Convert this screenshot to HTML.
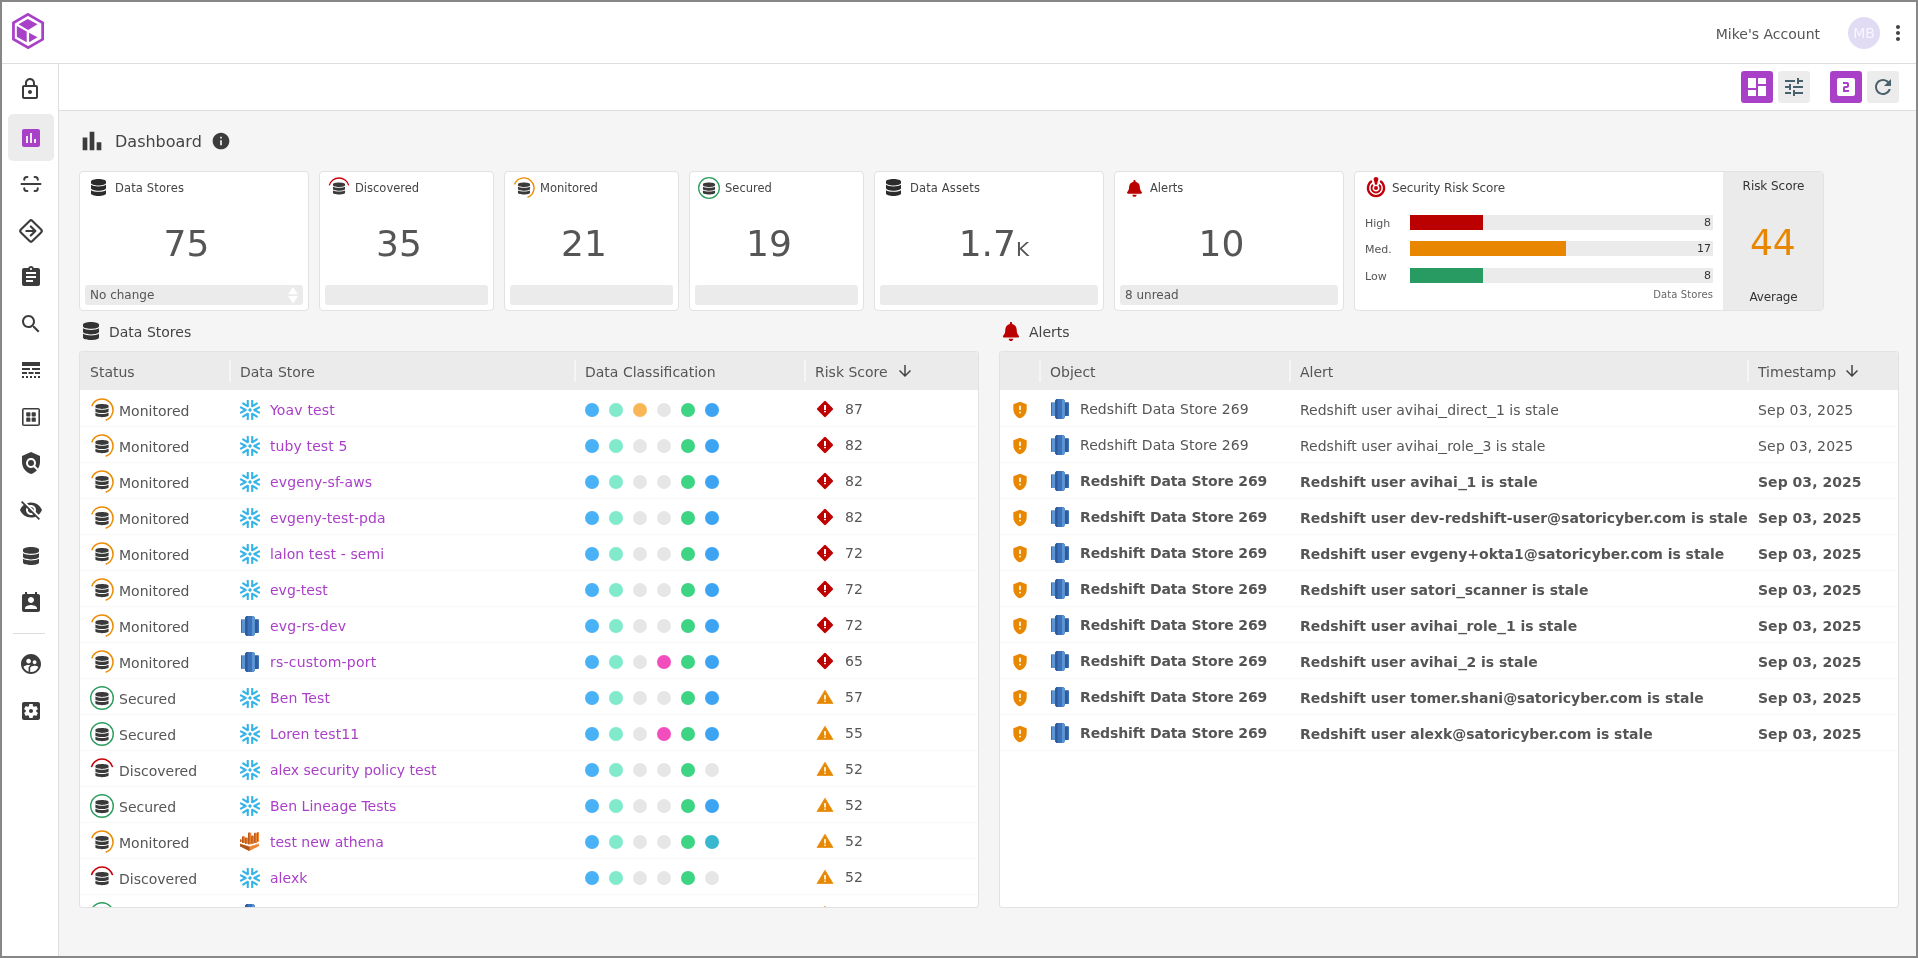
<!DOCTYPE html><html lang="en"><head><meta charset="utf-8"><title>Dashboard</title><style>
*{box-sizing:border-box}
html,body{margin:0;padding:0}
body{width:1918px;height:958px;overflow:hidden;background:#f5f5f5;font-family:"DejaVu Sans","Liberation Sans",sans-serif;color:#555;font-size:14px}
#app{position:relative;width:1918px;height:958px;overflow:hidden;background:#f5f5f5;will-change:transform;filter:grayscale(0)}
#frame{position:absolute;left:0;top:0;width:1918px;height:958px;border:2px solid #878787;border-right-width:2px;z-index:50;pointer-events:none}
.abs{position:absolute}
#header{position:absolute;left:0;top:0;width:1918px;height:64px;background:#fff;border-bottom:1px solid #dedede}
#side{position:absolute;left:0;top:64px;width:59px;height:894px;background:#fff;border-right:1px solid #dedede}
#tool{position:absolute;left:59px;top:64px;width:1859px;height:47px;background:#fff;border-bottom:1px solid #dedede}
.sico{position:absolute;left:19px;width:24px;height:24px}
.sico svg{display:block}
.tbtn{position:absolute;top:71px;width:32px;height:32px;border-radius:3px;background:#ececec}
.tbtn svg{position:absolute;left:4px;top:4px}
.card{position:absolute;top:171px;height:140px;background:#fff;border:1px solid #e2e2e2;border-radius:4px}
.card .lab{position:absolute;left:35px;top:9px;font-size:11.500px;line-height:15px;color:#444;white-space:nowrap}
.card .ico{position:absolute;left:9px;top:6px}
.card .num{position:absolute;left:0;right:15px;top:48px;text-align:center;font-size:36px;line-height:48px;color:#555}
.card .foot{position:absolute;left:5px;right:5px;bottom:5px;height:20px;background:#ebebeb;border-radius:3px;font-size:12px;line-height:20px;padding-left:5px;color:#555}
.sect{position:absolute;top:322px;font-size:14px;line-height:20px;color:#444;white-space:nowrap}
.panel{position:absolute;top:351px;height:557px;background:#fff;border:1px solid #e2e2e2;border-radius:3px;overflow:hidden}
.thead{position:absolute;left:0;top:0;right:0;height:38px;background:#ebebeb}
.th{position:absolute;top:0;height:38px;line-height:40px;font-size:14px;color:#555;white-space:nowrap}
.sep{position:absolute;top:8px;width:2px;height:22px;background:#f5f5f5}
.row{position:absolute;left:0;right:0;height:36px;border-bottom:1px solid #f8f8f8;white-space:nowrap}
.cell{position:absolute;top:1px;height:36px;line-height:36px;font-size:14px;color:#555}
.cell svg{position:absolute}
.lnk{color:#aa40c8}
.dot{position:absolute;top:12px;width:14px;height:14px;border-radius:50%}
.b{font-weight:bold;color:#555;letter-spacing:-.050px}
</style></head><body><div id="app">
<div id="header"><svg width="60" height="60" viewBox="0 0 958 958" style="position:absolute;left:4px;top:6px"><path d="M383 134L617 268V532L386 666L151 532V268z" fill="none" stroke="#a940c8" stroke-width="44" stroke-linejoin="miter"/><path d="M378 207L535 293L385 385L232 293z" fill="#a940c8"/><path d="M205 318L362 408V578L205 490z" fill="#a940c8"/><path d="M400 428L535 500L400 580z" fill="#a940c8"/></svg><div class="abs" style="right:98px;top:24px;font-size:14px;line-height:20px;color:#555">Mike's Account</div><div class="abs" style="left:1848px;top:17px;width:32px;height:32px;border-radius:50%;background:#e1dcf3;color:#f8f6fd;font-size:14px;line-height:32px;text-align:center">MB</div><div class="abs" style="left:1886px;top:21px"><svg width="24" height="24" viewBox="0 0 24 24" fill="#444" style=""><path d="M12 8c1.1 0 2-.9 2-2s-.9-2-2-2-2 .9-2 2 .9 2 2 2zm0 2c-1.1 0-2 .9-2 2s.9 2 2 2 2-.9 2-2-.9-2-2-2zm0 6c-1.1 0-2 .9-2 2s.9 2 2 2 2-.9 2-2-.9-2-2-2z"/></svg></div></div>
<div id="side"><div class="abs" style="left:8px;top:50px;width:46px;height:46.500px;border-radius:5px;background:#ececec"></div><div class="sico" style="top:13px"><svg width="24" height="24" viewBox="0 0 24 24" fill="#3c3c3c" style="margin-left:-1.200px"><path d="M18 8h-1V6c0-2.76-2.24-5-5-5S7 3.24 7 6v2H6c-1.1 0-2 .9-2 2v10c0 1.1.9 2 2 2h12c1.1 0 2-.9 2-2V10c0-1.1-.9-2-2-2zM9 6c0-1.66 1.34-3 3-3s3 1.34 3 3v2H9V6zm9 14H6V10h12v10zm-6-3c1.1 0 2-.9 2-2s-.9-2-2-2-2 .9-2 2 .9 2 2 2z"/></svg></div><div class="sico" style="top:62px"><svg width="24" height="24" viewBox="0 0 24 24" fill="#a940c8" style=""><path d="M19 3H5c-1.1 0-2 .9-2 2v14c0 1.1.9 2 2 2h14c1.1 0 2-.9 2-2V5c0-1.1-.9-2-2-2zM9 17H7v-7h2v7zm4 0h-2V7h2v10zm4 0h-2v-4h2v4z"/></svg></div><div class="sico" style="top:107.9px"><svg width="24" height="24" viewBox="-12 -12 24 24" fill="#3c3c3c" style=""><g fill="none" stroke="#3c3c3c" stroke-width="2" stroke-linecap="round" stroke-linejoin="round"><path d="M-6.750 -4.200V-4.600A2.500 2.500 0 0 1 -4.250 -7.100H-3.600M3.600 -7.100H4.250A2.500 2.500 0 0 1 6.750 -4.600V-4.200M6.750 4.200V4.600A2.500 2.500 0 0 1 4.250 7.100H3.600M-3.600 7.100H-4.250A2.500 2.500 0 0 1 -6.750 4.600V4.200M-9.500 0H9.500"/></g></svg></div><div class="sico" style="top:155px"><svg width="24" height="24" viewBox="-12 -12 24 24" fill="#3c3c3c" style="overflow:visible"><g fill="none" stroke="#3c3c3c" stroke-width="2.100" stroke-linecap="round" stroke-linejoin="round"><rect x="-8.150" y="-8.150" width="16.300" height="16.300" rx="2" transform="rotate(45)"/><path d="M-4.700 0H4.300M-.200 -4.600L4.400 0L-.200 4.600"/></g></svg></div><div class="sico" style="top:200.8px"><svg width="24" height="24" viewBox="0 0 24 24" fill="#3c3c3c" style=""><path d="M19 3h-4.18C14.4 1.84 13.3 1 12 1c-1.3 0-2.4.84-2.82 2H5c-1.1 0-2 .9-2 2v14c0 1.1.9 2 2 2h14c1.1 0 2-.9 2-2V5c0-1.1-.9-2-2-2zm-7 0c.55 0 1 .45 1 1s-.45 1-1 1-1-.45-1-1 .45-1 1-1zm2 14H7v-2h7v2zm3-4H7v-2h10v2zm0-4H7V7h10v2z"/></svg></div><div class="sico" style="top:247.5px"><svg width="24" height="24" viewBox="0 0 24 24" fill="#3c3c3c" style=""><path d="M15.5 14h-.79l-.28-.27C15.41 12.59 16 11.11 16 9.5 16 5.91 13.09 3 9.5 3S3 5.91 3 9.5 5.91 16 9.5 16c1.61 0 3.09-.59 4.23-1.57l.27.28v.79l5 4.99L20.49 19l-4.99-5zm-6 0C7.01 14 5 11.99 5 9.5S7.01 5 9.5 5 14 7.01 14 9.5 11.99 14 9.5 14z"/></svg></div><div class="sico" style="top:294px"><svg width="24" height="24" viewBox="0 0 24 24" fill="#3c3c3c" style=""><path d="M3 16h5v-2H3v2zm6.5 0h5v-2h-5v2zm6.5 0h5v-2h-5v2zM3 20h2v-2H3v2zm4 0h2v-2H7v2zm4 0h2v-2h-2v2zm4 0h2v-2h-2v2zm4 0h2v-2h-2v2zM3 12h8v-2H3v2zm10 0h8v-2h-8v2zM3 4v4h18V4H3z"/></svg></div><div class="sico" style="top:341px"><svg width="24" height="24" viewBox="0 0 24 24" fill="#3c3c3c" style=""><path d="M19 3H5c-1.100 0-2 .900-2 2v14c0 1.100.900 2 2 2h14c1.100 0 2-.900 2-2V5c0-1.100-.900-2-2-2zm.400 16.400H4.600V4.600h14.800v14.800zM8.050 7.200h2.500q.850 0 .850.850v2.500q0 .850-.850.850h-2.500q-.850 0-.850-.850v-2.500q0-.850.850-.850zm5.400 0h2.500q.850 0 .850.850v2.500q0 .850-.850.850h-2.500q-.850 0-.850-.850v-2.500q0-.850.850-.850zm-5.400 5.400h2.500q.850 0 .850.850v2.500q0 .850-.850.850h-2.500q-.850 0-.850-.850v-2.500q0-.850.850-.850zm5.400 0h2.500q.850 0 .850.850v2.500q0 .850-.850.850h-2.500q-.850 0-.850-.850v-2.500q0-.850.850-.850z"/></svg></div><div class="sico" style="top:386.5px"><svg width="24" height="24" viewBox="0 0 24 24" fill="#3c3c3c" style=""><path d="M21 5l-9-4-9 4v6c0 5.55 3.84 10.74 9 12 2.3-.56 4.33-1.9 5.88-3.71l-3.12-3.12c-1.94 1.29-4.58 1.07-6.29-.64-1.95-1.95-1.95-5.12 0-7.07 1.95-1.95 5.12-1.95 7.07 0 1.71 1.71 1.92 4.35.64 6.29l2.9 2.9C20.29 15.69 21 13.38 21 11V5zM12 9a3 3 0 100 6 3 3 0 000-6z"/></svg></div><div class="sico" style="top:434px"><svg width="24" height="24" viewBox="0 0 24 24" fill="#3c3c3c" style=""><path d="M12 7c2.76 0 5 2.24 5 5 0 .65-.13 1.26-.36 1.83l2.92 2.92c1.51-1.26 2.7-2.89 3.43-4.75-1.73-4.39-6-7.5-11-7.5-1.4 0-2.74.25-3.98.7l2.16 2.16C10.74 7.13 11.35 7 12 7zM2 4.27l2.28 2.28.46.46C3.08 8.3 1.78 10.02 1 12c1.73 4.39 6 7.5 11 7.5 1.55 0 3.03-.3 4.38-.84l.42.42L19.73 22 21 20.73 3.27 3 2 4.27zM7.53 9.8l1.55 1.55c-.05.21-.08.43-.08.65 0 1.66 1.34 3 3 3 .22 0 .44-.03.65-.08l1.55 1.55c-.67.33-1.41.53-2.2.53-2.76 0-5-2.24-5-5 0-.79.2-1.53.53-2.2zm4.31-.78l3.15 3.15.02-.16c0-1.66-1.34-3-3-3l-.17.01z"/></svg></div><div class="sico" style="top:480px"><svg width="16" height="18" viewBox="0 0 448 512" preserveAspectRatio="none" fill="#3c3c3c" style="margin:3px 4px"><path d="M448 73.143v45.714C448 159.143 347.667 192 224 192S0 159.143 0 118.857V73.143C0 32.857 100.333 0 224 0s224 32.857 224 73.143zM448 176v102.857C448 319.143 347.667 352 224 352S0 319.143 0 278.857V176c48.125 33.143 136.208 48.572 224 48.572S399.874 209.143 448 176zm0 160v102.857C448 479.143 347.667 512 224 512S0 479.143 0 438.857V336c48.125 33.143 136.208 48.572 224 48.572S399.874 369.143 448 336z"/></svg></div><div class="sico" style="top:526.9px"><svg width="24" height="24" viewBox="0 0 24 24" fill="#3c3c3c" style=""><path d="M19 3h-1V1h-2v2H8V1H6v2H5c-1.11 0-2 .9-2 2v14c0 1.1.89 2 2 2h14c1.1 0 2-.9 2-2V5c0-1.1-.9-2-2-2zm-7 3c1.66 0 3 1.34 3 3s-1.34 3-3 3-3-1.34-3-3 1.34-3 3-3zm6 12H6v-1c0-2 4-3.1 6-3.1s6 1.1 6 3.1v1z"/></svg></div><div class="sico" style="top:587.5px"><svg width="24" height="24" viewBox="0 0 24 24" fill="#3c3c3c" style=""><path d="M11.99 2c-5.52 0-10 4.48-10 10s4.48 10 10 10 10-4.48 10-10-4.48-10-10-10zm3.61 6.34c1.07 0 1.93.86 1.93 1.93 0 1.07-.86 1.93-1.93 1.93-1.07 0-1.93-.86-1.93-1.93-.01-1.07.86-1.93 1.93-1.93zm-6-1.58c1.3 0 2.36 1.06 2.36 2.36 0 1.3-1.06 2.36-2.36 2.36s-2.36-1.06-2.36-2.36c0-1.31 1.05-2.36 2.36-2.36zm0 9.13v3.75c-2.4-.75-4.3-2.6-5.14-4.96 1.05-1.12 3.67-1.69 5.14-1.69.53 0 1.2.08 1.9.22-1.64.87-1.9 2.02-1.9 2.68zM11.99 20c-.27 0-.53-.01-.79-.04v-4.07c0-1.42 2.94-2.13 4.4-2.13 1.07 0 2.92.39 3.84 1.15-1.17 2.97-4.06 5.09-7.45 5.09z"/></svg></div><div class="sico" style="top:634.5px"><svg width="24" height="24" viewBox="0 0 24 24" fill="#3c3c3c" style=""><path d="M12 10c-1.1 0-2 .9-2 2s.9 2 2 2 2-.9 2-2-.9-2-2-2zm7-7H5c-1.11 0-2 .9-2 2v14c0 1.1.89 2 2 2h14c1.11 0 2-.9 2-2V5c0-1.1-.89-2-2-2zm-1.75 9c0 .23-.02.46-.05.68l1.48 1.16c.13.11.17.3.08.45l-1.4 2.42c-.09.15-.27.21-.43.15l-1.74-.7c-.36.28-.76.51-1.18.69l-.26 1.85c-.03.17-.18.3-.35.3h-2.8c-.17 0-.32-.13-.35-.29l-.26-1.85c-.43-.18-.82-.41-1.18-.69l-1.74.7c-.16.06-.34 0-.43-.15l-1.4-2.42c-.09-.15-.05-.34.08-.45l1.48-1.16c-.03-.23-.05-.46-.05-.69 0-.23.02-.46.05-.68l-1.48-1.16c-.13-.11-.17-.3-.08-.45l1.4-2.42c.09-.15.27-.21.43-.15l1.74.7c.36-.28.76-.51 1.18-.69l.26-1.85c.03-.17.18-.3.35-.3h2.8c.17 0 .32.13.35.29l.26 1.85c.43.18.82.41 1.18.69l1.74-.7c.16-.06.34 0 .43.15l1.4 2.42c.09.15.05.34-.08.45l-1.48 1.16c.03.23.05.46.05.69z"/></svg></div><div class="abs" style="left:13px;top:569px;width:32px;height:1px;background:#dcdcdc"></div></div>
<div id="tool"></div>
<div class="tbtn" style="left:1741px;background:#a940c8"><svg width="24" height="24" viewBox="0 0 24 24" fill="#fff" style=""><path d="M3 13h8V3H3v10zm0 8h8v-6H3v6zm10 0h8V11h-8v10zm0-18v6h8V3h-8z"/></svg></div>
<div class="tbtn" style="left:1778px"><svg width="24" height="24" viewBox="0 0 24 24" fill="#49616d" style=""><path d="M3 17v2h6v-2H3zM3 5v2h10V5H3zm10 16v-2h8v-2h-8v-2h-2v6h2zM7 9v2H3v2h4v2h2V9H7zm14 4v-2H11v2h10zm-6-4h2V7h4V5h-4V3h-2v6z"/></svg></div>
<div class="tbtn" style="left:1830px;background:#a940c8"><svg width="24" height="24" viewBox="0 0 24 24" fill="#fff" style=""><path d="M19 3H5c-1.1 0-2 .9-2 2v14c0 1.1.9 2 2 2h14c1.1 0 2-.9 2-2V5c0-1.1-.9-2-2-2zm-4 8c0 1.11-.9 2-2 2h-2v2h4v2H9v-4c0-1.11.9-2 2-2h2V9H9V7h4c1.1 0 2 .89 2 2v2z"/></svg></div>
<div class="tbtn" style="left:1867px"><svg width="24" height="24" viewBox="0 0 24 24" fill="#49616d" style=""><path d="M17.65 6.35C16.2 4.9 14.21 4 12 4c-4.42 0-7.99 3.58-7.99 8s3.57 8 7.99 8c3.73 0 6.84-2.55 7.73-6h-2.08c-.82 2.33-3.04 4-5.65 4-3.31 0-6-2.69-6-6s2.69-6 6-6c1.66 0 3.14.69 4.22 1.78L13 11h7V4l-2.35 2.35z"/></svg></div>
<div class="abs" style="left:78px;top:127px"><svg width="28" height="28" viewBox="0 0 24 24" fill="#3c3c3c" style=""><path d="M16 20v-7h4v7h-4Zm-6 0V4h4v16h-4Zm-6 0V9h4v11H4Z"/></svg></div>
<div class="abs" style="left:115px;top:131px;font-size:16px;line-height:22px;color:#444">Dashboard</div>
<div class="abs" style="left:211px;top:131px"><svg width="20" height="20" viewBox="0 0 24 24" fill="#3c3c3c" style=""><path d="M12 2C6.48 2 2 6.48 2 12s4.48 10 10 10 10-4.48 10-10S17.52 2 12 2zm1 15h-2v-6h2v6zm0-8h-2V7h2v2z"/></svg></div>
<div class="card" style="left:79px;width:230px"><svg width="15" height="17" viewBox="0 0 448 512" preserveAspectRatio="none" fill="#2b2b2b" style="position:absolute;left:11px;top:7px"><path d="M448 73.143v45.714C448 159.143 347.667 192 224 192S0 159.143 0 118.857V73.143C0 32.857 100.333 0 224 0s224 32.857 224 73.143zM448 176v102.857C448 319.143 347.667 352 224 352S0 319.143 0 278.857V176c48.125 33.143 136.208 48.572 224 48.572S399.874 209.143 448 176zm0 160v102.857C448 479.143 347.667 512 224 512S0 479.143 0 438.857V336c48.125 33.143 136.208 48.572 224 48.572S399.874 369.143 448 336z"/></svg><div class="lab"><span style="letter-spacing:.140px">Data Stores</span></div><div class="num" style="">75</div><div class="foot">No change</div><svg class="abs" style="left:207.900px;top:115.200px" width="10" height="16.400" viewBox="0 0 10 16.400"><path d="M5 0l5 7.300H0zM5 16.400l5-7.300H0z" fill="#fff"/></svg></div>
<div class="card" style="left:319px;width:175px"><svg width="22" height="22" viewBox="0 0 24 24" fill="none" style="position:absolute;left:8px;top:5px"><path d="M1.420 9.170A10.950 10.950 0 0 1 22.580 9.170" fill="none" stroke="#c8000a" stroke-width="1.500"/><g transform="translate(5.400 6) scale(.02946 .02578)"><path fill="#3a3a3a" d="M448 73.143v45.714C448 159.143 347.667 192 224 192S0 159.143 0 118.857V73.143C0 32.857 100.333 0 224 0s224 32.857 224 73.143zM448 176v102.857C448 319.143 347.667 352 224 352S0 319.143 0 278.857V176c48.125 33.143 136.208 48.572 224 48.572S399.874 209.143 448 176zm0 160v102.857C448 479.143 347.667 512 224 512S0 479.143 0 438.857V336c48.125 33.143 136.208 48.572 224 48.572S399.874 369.143 448 336z"/></g></svg><div class="lab">Discovered</div><div class="num" style="">35</div><div class="foot"></div></div>
<div class="card" style="left:504px;width:175px"><svg width="22" height="22" viewBox="0 0 24 24" fill="none" style="position:absolute;left:8px;top:5px"><path d="M1.720 8.270A10.950 10.950 0 1 1 15.750 22.290" fill="none" stroke="#ec8b00" stroke-width="1.500"/><g transform="translate(5.400 6) scale(.02946 .02578)"><path fill="#3a3a3a" d="M448 73.143v45.714C448 159.143 347.667 192 224 192S0 159.143 0 118.857V73.143C0 32.857 100.333 0 224 0s224 32.857 224 73.143zM448 176v102.857C448 319.143 347.667 352 224 352S0 319.143 0 278.857V176c48.125 33.143 136.208 48.572 224 48.572S399.874 209.143 448 176zm0 160v102.857C448 479.143 347.667 512 224 512S0 479.143 0 438.857V336c48.125 33.143 136.208 48.572 224 48.572S399.874 369.143 448 336z"/></g></svg><div class="lab">Monitored</div><div class="num" style="">21</div><div class="foot"></div></div>
<div class="card" style="left:689px;width:175px"><svg width="22" height="22" viewBox="0 0 24 24" fill="none" style="position:absolute;left:8px;top:5px"><circle cx="12" cy="12" r="11.300" fill="none" stroke="#2a9d5f" stroke-width="1.400"/><g transform="translate(5.400 6) scale(.02946 .02578)"><path fill="#3a3a3a" d="M448 73.143v45.714C448 159.143 347.667 192 224 192S0 159.143 0 118.857V73.143C0 32.857 100.333 0 224 0s224 32.857 224 73.143zM448 176v102.857C448 319.143 347.667 352 224 352S0 319.143 0 278.857V176c48.125 33.143 136.208 48.572 224 48.572S399.874 209.143 448 176zm0 160v102.857C448 479.143 347.667 512 224 512S0 479.143 0 438.857V336c48.125 33.143 136.208 48.572 224 48.572S399.874 369.143 448 336z"/></g></svg><div class="lab">Secured</div><div class="num" style="">19</div><div class="foot"></div></div>
<div class="card" style="left:874px;width:230px"><svg width="15" height="17" viewBox="0 0 448 512" preserveAspectRatio="none" fill="#2b2b2b" style="position:absolute;left:11px;top:7px"><path d="M448 73.143v45.714C448 159.143 347.667 192 224 192S0 159.143 0 118.857V73.143C0 32.857 100.333 0 224 0s224 32.857 224 73.143zM448 176v102.857C448 319.143 347.667 352 224 352S0 319.143 0 278.857V176c48.125 33.143 136.208 48.572 224 48.572S399.874 209.143 448 176zm0 160v102.857C448 479.143 347.667 512 224 512S0 479.143 0 438.857V336c48.125 33.143 136.208 48.572 224 48.572S399.874 369.143 448 336z"/></svg><div class="lab"><span style="letter-spacing:.140px">Data Assets</span></div><div class="num" style="right:-9.800px">1.7<span style="font-size:20px">K</span></div><div class="foot"></div></div>
<div class="card" style="left:1114px;width:230px"><svg width="15" height="16.8" viewBox="0 0 448 512" preserveAspectRatio="none" fill="#bb0000" style="position:absolute;left:11.500px;top:8px"><path d="M224 512c35.320 0 63.970-28.650 63.970-64H160.030c0 35.350 28.650 64 63.970 64zm215.390-149.710c-19.320-20.760-55.470-51.990-55.470-154.290 0-77.700-54.480-139.900-127.940-155.160V32c0-17.670-14.320-32-31.980-32s-31.980 14.330-31.980 32v20.840C118.560 68.100 64.080 130.300 64.080 208c0 102.300-36.150 133.530-55.470 154.290-6 6.450-8.660 14.160-8.610 21.710.110 16.400 12.980 32 32.100 32h383.800c19.120 0 32-15.600 32.100-32 .050-7.550-2.610-15.270-8.610-21.710z"/></svg><div class="lab">Alerts</div><div class="num" style="">10</div><div class="foot">8 unread</div></div>
<div class="card" style="left:1354px;width:470px;overflow:hidden"><svg width="24" height="24" viewBox="-12 -12 24 24" style="position:absolute;left:9.040px;top:3.870px"><g fill="none" stroke="#c0000a" stroke-linecap="butt"><path d="M4.146 -6.900A8.05 8.05 0 1 1 -4.146 -6.900" stroke-width="2.300"/><path d="M3.069 -3.291A4.5 4.5 0 1 1 -3.069 -3.291" stroke-width="1.900"/></g><circle cx="0" cy="0" r="2" fill="#c0000a"/><path d="M0 -10.900C1.600 -10.900 2.300 -9.900 2.300 -8.800L1 -3.500Q0 -2.900 -1 -3.500L-2.300 -8.800C-2.300 -9.900 -1.600 -10.900 0 -10.900z" fill="#c0000a"/></svg><div class="lab" style="left:37px;font-size:12px;letter-spacing:-.120px">Security Risk Score</div><div class="abs" style="left:10px;top:43.75px;font-size:11px;line-height:16px;color:#555">High</div><div class="abs" style="left:55px;top:43px;width:303px;height:15px;background:#ebebeb"><div style="width:73px;height:15px;background:#bb0000"></div><div class="abs" style="right:2px;top:0;font-size:11px;line-height:15px;color:#333">8</div></div><div class="abs" style="left:10px;top:69.75px;font-size:11px;line-height:16px;color:#555">Med.</div><div class="abs" style="left:55px;top:69px;width:303px;height:15px;background:#ebebeb"><div style="width:156px;height:15px;background:#e88600"></div><div class="abs" style="right:2px;top:0;font-size:11px;line-height:15px;color:#333">17</div></div><div class="abs" style="left:10px;top:96.75px;font-size:11px;line-height:16px;color:#555">Low</div><div class="abs" style="left:55px;top:96px;width:303px;height:15px;background:#ebebeb"><div style="width:73px;height:15px;background:#289b63"></div><div class="abs" style="right:2px;top:0;font-size:11px;line-height:15px;color:#333">8</div></div><div class="abs" style="right:110px;top:117.300px;font-size:10px;line-height:12px;color:#666;letter-spacing:.100px">Data Stores</div><div class="abs" style="left:368px;top:-1px;width:102px;height:140px;background:#ebebeb;text-align:center"><div class="abs" style="left:-1px;right:0;top:8px;font-size:12px;line-height:15px;color:#333;letter-spacing:-.050px">Risk Score</div><div class="abs" style="left:-2.400px;right:0;top:48px;font-size:36px;line-height:48px;color:#e88600">44</div><div class="abs" style="left:-1px;right:0;top:119px;font-size:12px;line-height:15px;color:#333;letter-spacing:-.200px">Average</div></div></div>
<div class="abs" style="left:83px;top:322px"><svg width="16" height="18" viewBox="0 0 448 512" preserveAspectRatio="none" fill="#333" style="display:block"><path d="M448 73.143v45.714C448 159.143 347.667 192 224 192S0 159.143 0 118.857V73.143C0 32.857 100.333 0 224 0s224 32.857 224 73.143zM448 176v102.857C448 319.143 347.667 352 224 352S0 319.143 0 278.857V176c48.125 33.143 136.208 48.572 224 48.572S399.874 209.143 448 176zm0 160v102.857C448 479.143 347.667 512 224 512S0 479.143 0 438.857V336c48.125 33.143 136.208 48.572 224 48.572S399.874 369.143 448 336z"/></svg></div><div class="sect" style="left:109px"><span style="">Data Stores</span></div>
<div class="abs" style="left:1003.100px;top:321.500px"><svg width="16" height="19.2" viewBox="0 0 448 512" preserveAspectRatio="none" fill="#bb0000" style="display:block"><path d="M224 512c35.320 0 63.970-28.650 63.970-64H160.030c0 35.350 28.650 64 63.970 64zm215.390-149.710c-19.320-20.760-55.470-51.990-55.470-154.290 0-77.700-54.480-139.900-127.940-155.160V32c0-17.670-14.320-32-31.980-32s-31.980 14.330-31.980 32v20.840C118.560 68.100 64.080 130.300 64.080 208c0 102.300-36.150 133.530-55.470 154.290-6 6.450-8.660 14.160-8.610 21.710.110 16.400 12.980 32 32.100 32h383.800c19.120 0 32-15.600 32.100-32 .050-7.550-2.610-15.270-8.610-21.710z"/></svg></div><div class="sect" style="left:1029px"><span style="">Alerts</span></div>
<div class="panel" style="left:79px;width:900px"><div class="thead"><div class="th" style="left:10px;">Status</div><div class="th" style="left:160px;">Data Store</div><div class="th" style="left:505px;">Data Classification</div><div class="th" style="left:735px;">Risk Score</div><div class="sep" style="left:149px"></div><div class="sep" style="left:494px"></div><div class="sep" style="left:724px"></div><div class="abs" style="left:816px;top:10px"><svg width="18" height="18" viewBox="0 0 24 24" fill="#444" style=""><path d="M20 12l-1.41-1.41L13 16.17V4h-2v12.17l-5.58-5.59L4 12l8 8 8-8z"/></svg></div></div><div class="row" style="top:39px"><div class="cell" style="left:10px"><svg width="24" height="24" viewBox="0 0 24 24" fill="none" style="left:0;top:6px"><path d="M1.720 8.270A10.950 10.950 0 1 1 15.750 22.290" fill="none" stroke="#ec8b00" stroke-width="1.500"/><g transform="translate(5.400 6) scale(.02946 .02578)"><path fill="#3a3a3a" d="M448 73.143v45.714C448 159.143 347.667 192 224 192S0 159.143 0 118.857V73.143C0 32.857 100.333 0 224 0s224 32.857 224 73.143zM448 176v102.857C448 319.143 347.667 352 224 352S0 319.143 0 278.857V176c48.125 33.143 136.208 48.572 224 48.572S399.874 209.143 448 176zm0 160v102.857C448 479.143 347.667 512 224 512S0 479.143 0 438.857V336c48.125 33.143 136.208 48.572 224 48.572S399.874 369.143 448 336z"/></g></svg><span style="margin-left:29px;position:relative;top:1px;">Monitored</span></div><div class="cell" style="left:160px"><svg width="20" height="20" viewBox="-239.500 -239.500 479 479" style="left:0;top:7.900px"><g fill="none" stroke="#33b3ea" stroke-width="50" stroke-linecap="round" stroke-linejoin="round"><path transform="rotate(0)" d="M219 -64L103 0L219 64"/><path transform="rotate(60)" d="M219 -64L103 0L219 64"/><path transform="rotate(120)" d="M219 -64L103 0L219 64"/><path transform="rotate(180)" d="M219 -64L103 0L219 64"/><path transform="rotate(240)" d="M219 -64L103 0L219 64"/><path transform="rotate(300)" d="M219 -64L103 0L219 64"/></g><rect x="-37" y="-37" width="74" height="74" rx="12" transform="rotate(45)" fill="#33b3ea"/></svg><span class="lnk" style="margin-left:30px;letter-spacing:0.163px">Yoav test</span></div><div class="dot" style="left:505px;background:#49b1f5"></div><div class="dot" style="left:529px;background:#80eacb"></div><div class="dot" style="left:553px;background:#f8b657"></div><div class="dot" style="left:577px;background:#e6e6e6"></div><div class="dot" style="left:601px;background:#3dd584"></div><div class="dot" style="left:625px;background:#3da4f4"></div><div class="cell" style="left:736px"><svg width="18" height="18" viewBox="-9 -9 18 18" style="left:.130px;top:7.920px"><rect x="-6.080" y="-6.080" width="12.160" height="12.160" rx="1.200" transform="rotate(45)" fill="#bd0000"/><rect x="-1" y="-3.900" width="2" height="5" fill="#fff"/><rect x="-1" y="2.100" width="2" height="1.100" fill="#fff"/></svg><span style="margin-left:29px;position:relative;top:-1px">87</span></div></div><div class="row" style="top:75px"><div class="cell" style="left:10px"><svg width="24" height="24" viewBox="0 0 24 24" fill="none" style="left:0;top:6px"><path d="M1.720 8.270A10.950 10.950 0 1 1 15.750 22.290" fill="none" stroke="#ec8b00" stroke-width="1.500"/><g transform="translate(5.400 6) scale(.02946 .02578)"><path fill="#3a3a3a" d="M448 73.143v45.714C448 159.143 347.667 192 224 192S0 159.143 0 118.857V73.143C0 32.857 100.333 0 224 0s224 32.857 224 73.143zM448 176v102.857C448 319.143 347.667 352 224 352S0 319.143 0 278.857V176c48.125 33.143 136.208 48.572 224 48.572S399.874 209.143 448 176zm0 160v102.857C448 479.143 347.667 512 224 512S0 479.143 0 438.857V336c48.125 33.143 136.208 48.572 224 48.572S399.874 369.143 448 336z"/></g></svg><span style="margin-left:29px;position:relative;top:1px;">Monitored</span></div><div class="cell" style="left:160px"><svg width="20" height="20" viewBox="-239.500 -239.500 479 479" style="left:0;top:7.900px"><g fill="none" stroke="#33b3ea" stroke-width="50" stroke-linecap="round" stroke-linejoin="round"><path transform="rotate(0)" d="M219 -64L103 0L219 64"/><path transform="rotate(60)" d="M219 -64L103 0L219 64"/><path transform="rotate(120)" d="M219 -64L103 0L219 64"/><path transform="rotate(180)" d="M219 -64L103 0L219 64"/><path transform="rotate(240)" d="M219 -64L103 0L219 64"/><path transform="rotate(300)" d="M219 -64L103 0L219 64"/></g><rect x="-37" y="-37" width="74" height="74" rx="12" transform="rotate(45)" fill="#33b3ea"/></svg><span class="lnk" style="margin-left:30px;letter-spacing:0.110px">tuby test 5</span></div><div class="dot" style="left:505px;background:#49b1f5"></div><div class="dot" style="left:529px;background:#80eacb"></div><div class="dot" style="left:553px;background:#e6e6e6"></div><div class="dot" style="left:577px;background:#e6e6e6"></div><div class="dot" style="left:601px;background:#3dd584"></div><div class="dot" style="left:625px;background:#3da4f4"></div><div class="cell" style="left:736px"><svg width="18" height="18" viewBox="-9 -9 18 18" style="left:.130px;top:7.920px"><rect x="-6.080" y="-6.080" width="12.160" height="12.160" rx="1.200" transform="rotate(45)" fill="#bd0000"/><rect x="-1" y="-3.900" width="2" height="5" fill="#fff"/><rect x="-1" y="2.100" width="2" height="1.100" fill="#fff"/></svg><span style="margin-left:29px;position:relative;top:-1px">82</span></div></div><div class="row" style="top:111px"><div class="cell" style="left:10px"><svg width="24" height="24" viewBox="0 0 24 24" fill="none" style="left:0;top:6px"><path d="M1.720 8.270A10.950 10.950 0 1 1 15.750 22.290" fill="none" stroke="#ec8b00" stroke-width="1.500"/><g transform="translate(5.400 6) scale(.02946 .02578)"><path fill="#3a3a3a" d="M448 73.143v45.714C448 159.143 347.667 192 224 192S0 159.143 0 118.857V73.143C0 32.857 100.333 0 224 0s224 32.857 224 73.143zM448 176v102.857C448 319.143 347.667 352 224 352S0 319.143 0 278.857V176c48.125 33.143 136.208 48.572 224 48.572S399.874 209.143 448 176zm0 160v102.857C448 479.143 347.667 512 224 512S0 479.143 0 438.857V336c48.125 33.143 136.208 48.572 224 48.572S399.874 369.143 448 336z"/></g></svg><span style="margin-left:29px;position:relative;top:1px;">Monitored</span></div><div class="cell" style="left:160px"><svg width="20" height="20" viewBox="-239.500 -239.500 479 479" style="left:0;top:7.900px"><g fill="none" stroke="#33b3ea" stroke-width="50" stroke-linecap="round" stroke-linejoin="round"><path transform="rotate(0)" d="M219 -64L103 0L219 64"/><path transform="rotate(60)" d="M219 -64L103 0L219 64"/><path transform="rotate(120)" d="M219 -64L103 0L219 64"/><path transform="rotate(180)" d="M219 -64L103 0L219 64"/><path transform="rotate(240)" d="M219 -64L103 0L219 64"/><path transform="rotate(300)" d="M219 -64L103 0L219 64"/></g><rect x="-37" y="-37" width="74" height="74" rx="12" transform="rotate(45)" fill="#33b3ea"/></svg><span class="lnk" style="margin-left:30px;letter-spacing:0.158px">evgeny-sf-aws</span></div><div class="dot" style="left:505px;background:#49b1f5"></div><div class="dot" style="left:529px;background:#80eacb"></div><div class="dot" style="left:553px;background:#e6e6e6"></div><div class="dot" style="left:577px;background:#e6e6e6"></div><div class="dot" style="left:601px;background:#3dd584"></div><div class="dot" style="left:625px;background:#3da4f4"></div><div class="cell" style="left:736px"><svg width="18" height="18" viewBox="-9 -9 18 18" style="left:.130px;top:7.920px"><rect x="-6.080" y="-6.080" width="12.160" height="12.160" rx="1.200" transform="rotate(45)" fill="#bd0000"/><rect x="-1" y="-3.900" width="2" height="5" fill="#fff"/><rect x="-1" y="2.100" width="2" height="1.100" fill="#fff"/></svg><span style="margin-left:29px;position:relative;top:-1px">82</span></div></div><div class="row" style="top:147px"><div class="cell" style="left:10px"><svg width="24" height="24" viewBox="0 0 24 24" fill="none" style="left:0;top:6px"><path d="M1.720 8.270A10.950 10.950 0 1 1 15.750 22.290" fill="none" stroke="#ec8b00" stroke-width="1.500"/><g transform="translate(5.400 6) scale(.02946 .02578)"><path fill="#3a3a3a" d="M448 73.143v45.714C448 159.143 347.667 192 224 192S0 159.143 0 118.857V73.143C0 32.857 100.333 0 224 0s224 32.857 224 73.143zM448 176v102.857C448 319.143 347.667 352 224 352S0 319.143 0 278.857V176c48.125 33.143 136.208 48.572 224 48.572S399.874 209.143 448 176zm0 160v102.857C448 479.143 347.667 512 224 512S0 479.143 0 438.857V336c48.125 33.143 136.208 48.572 224 48.572S399.874 369.143 448 336z"/></g></svg><span style="margin-left:29px;position:relative;top:1px;">Monitored</span></div><div class="cell" style="left:160px"><svg width="20" height="20" viewBox="-239.500 -239.500 479 479" style="left:0;top:7.900px"><g fill="none" stroke="#33b3ea" stroke-width="50" stroke-linecap="round" stroke-linejoin="round"><path transform="rotate(0)" d="M219 -64L103 0L219 64"/><path transform="rotate(60)" d="M219 -64L103 0L219 64"/><path transform="rotate(120)" d="M219 -64L103 0L219 64"/><path transform="rotate(180)" d="M219 -64L103 0L219 64"/><path transform="rotate(240)" d="M219 -64L103 0L219 64"/><path transform="rotate(300)" d="M219 -64L103 0L219 64"/></g><rect x="-37" y="-37" width="74" height="74" rx="12" transform="rotate(45)" fill="#33b3ea"/></svg><span class="lnk" style="margin-left:30px;letter-spacing:0.064px">evgeny-test-pda</span></div><div class="dot" style="left:505px;background:#49b1f5"></div><div class="dot" style="left:529px;background:#80eacb"></div><div class="dot" style="left:553px;background:#e6e6e6"></div><div class="dot" style="left:577px;background:#e6e6e6"></div><div class="dot" style="left:601px;background:#3dd584"></div><div class="dot" style="left:625px;background:#3da4f4"></div><div class="cell" style="left:736px"><svg width="18" height="18" viewBox="-9 -9 18 18" style="left:.130px;top:7.920px"><rect x="-6.080" y="-6.080" width="12.160" height="12.160" rx="1.200" transform="rotate(45)" fill="#bd0000"/><rect x="-1" y="-3.900" width="2" height="5" fill="#fff"/><rect x="-1" y="2.100" width="2" height="1.100" fill="#fff"/></svg><span style="margin-left:29px;position:relative;top:-1px">82</span></div></div><div class="row" style="top:183px"><div class="cell" style="left:10px"><svg width="24" height="24" viewBox="0 0 24 24" fill="none" style="left:0;top:6px"><path d="M1.720 8.270A10.950 10.950 0 1 1 15.750 22.290" fill="none" stroke="#ec8b00" stroke-width="1.500"/><g transform="translate(5.400 6) scale(.02946 .02578)"><path fill="#3a3a3a" d="M448 73.143v45.714C448 159.143 347.667 192 224 192S0 159.143 0 118.857V73.143C0 32.857 100.333 0 224 0s224 32.857 224 73.143zM448 176v102.857C448 319.143 347.667 352 224 352S0 319.143 0 278.857V176c48.125 33.143 136.208 48.572 224 48.572S399.874 209.143 448 176zm0 160v102.857C448 479.143 347.667 512 224 512S0 479.143 0 438.857V336c48.125 33.143 136.208 48.572 224 48.572S399.874 369.143 448 336z"/></g></svg><span style="margin-left:29px;position:relative;top:1px;">Monitored</span></div><div class="cell" style="left:160px"><svg width="20" height="20" viewBox="-239.500 -239.500 479 479" style="left:0;top:7.900px"><g fill="none" stroke="#33b3ea" stroke-width="50" stroke-linecap="round" stroke-linejoin="round"><path transform="rotate(0)" d="M219 -64L103 0L219 64"/><path transform="rotate(60)" d="M219 -64L103 0L219 64"/><path transform="rotate(120)" d="M219 -64L103 0L219 64"/><path transform="rotate(180)" d="M219 -64L103 0L219 64"/><path transform="rotate(240)" d="M219 -64L103 0L219 64"/><path transform="rotate(300)" d="M219 -64L103 0L219 64"/></g><rect x="-37" y="-37" width="74" height="74" rx="12" transform="rotate(45)" fill="#33b3ea"/></svg><span class="lnk" style="margin-left:30px;letter-spacing:0.100px">lalon test - semi</span></div><div class="dot" style="left:505px;background:#49b1f5"></div><div class="dot" style="left:529px;background:#80eacb"></div><div class="dot" style="left:553px;background:#e6e6e6"></div><div class="dot" style="left:577px;background:#e6e6e6"></div><div class="dot" style="left:601px;background:#3dd584"></div><div class="dot" style="left:625px;background:#3da4f4"></div><div class="cell" style="left:736px"><svg width="18" height="18" viewBox="-9 -9 18 18" style="left:.130px;top:7.920px"><rect x="-6.080" y="-6.080" width="12.160" height="12.160" rx="1.200" transform="rotate(45)" fill="#bd0000"/><rect x="-1" y="-3.900" width="2" height="5" fill="#fff"/><rect x="-1" y="2.100" width="2" height="1.100" fill="#fff"/></svg><span style="margin-left:29px;position:relative;top:-1px">72</span></div></div><div class="row" style="top:219px"><div class="cell" style="left:10px"><svg width="24" height="24" viewBox="0 0 24 24" fill="none" style="left:0;top:6px"><path d="M1.720 8.270A10.950 10.950 0 1 1 15.750 22.290" fill="none" stroke="#ec8b00" stroke-width="1.500"/><g transform="translate(5.400 6) scale(.02946 .02578)"><path fill="#3a3a3a" d="M448 73.143v45.714C448 159.143 347.667 192 224 192S0 159.143 0 118.857V73.143C0 32.857 100.333 0 224 0s224 32.857 224 73.143zM448 176v102.857C448 319.143 347.667 352 224 352S0 319.143 0 278.857V176c48.125 33.143 136.208 48.572 224 48.572S399.874 209.143 448 176zm0 160v102.857C448 479.143 347.667 512 224 512S0 479.143 0 438.857V336c48.125 33.143 136.208 48.572 224 48.572S399.874 369.143 448 336z"/></g></svg><span style="margin-left:29px;position:relative;top:1px;">Monitored</span></div><div class="cell" style="left:160px"><svg width="20" height="20" viewBox="-239.500 -239.500 479 479" style="left:0;top:7.900px"><g fill="none" stroke="#33b3ea" stroke-width="50" stroke-linecap="round" stroke-linejoin="round"><path transform="rotate(0)" d="M219 -64L103 0L219 64"/><path transform="rotate(60)" d="M219 -64L103 0L219 64"/><path transform="rotate(120)" d="M219 -64L103 0L219 64"/><path transform="rotate(180)" d="M219 -64L103 0L219 64"/><path transform="rotate(240)" d="M219 -64L103 0L219 64"/><path transform="rotate(300)" d="M219 -64L103 0L219 64"/></g><rect x="-37" y="-37" width="74" height="74" rx="12" transform="rotate(45)" fill="#33b3ea"/></svg><span class="lnk" style="margin-left:30px;letter-spacing:0.000px">evg-test</span></div><div class="dot" style="left:505px;background:#49b1f5"></div><div class="dot" style="left:529px;background:#80eacb"></div><div class="dot" style="left:553px;background:#e6e6e6"></div><div class="dot" style="left:577px;background:#e6e6e6"></div><div class="dot" style="left:601px;background:#3dd584"></div><div class="dot" style="left:625px;background:#3da4f4"></div><div class="cell" style="left:736px"><svg width="18" height="18" viewBox="-9 -9 18 18" style="left:.130px;top:7.920px"><rect x="-6.080" y="-6.080" width="12.160" height="12.160" rx="1.200" transform="rotate(45)" fill="#bd0000"/><rect x="-1" y="-3.900" width="2" height="5" fill="#fff"/><rect x="-1" y="2.100" width="2" height="1.100" fill="#fff"/></svg><span style="margin-left:29px;position:relative;top:-1px">72</span></div></div><div class="row" style="top:255px"><div class="cell" style="left:10px"><svg width="24" height="24" viewBox="0 0 24 24" fill="none" style="left:0;top:6px"><path d="M1.720 8.270A10.950 10.950 0 1 1 15.750 22.290" fill="none" stroke="#ec8b00" stroke-width="1.500"/><g transform="translate(5.400 6) scale(.02946 .02578)"><path fill="#3a3a3a" d="M448 73.143v45.714C448 159.143 347.667 192 224 192S0 159.143 0 118.857V73.143C0 32.857 100.333 0 224 0s224 32.857 224 73.143zM448 176v102.857C448 319.143 347.667 352 224 352S0 319.143 0 278.857V176c48.125 33.143 136.208 48.572 224 48.572S399.874 209.143 448 176zm0 160v102.857C448 479.143 347.667 512 224 512S0 479.143 0 438.857V336c48.125 33.143 136.208 48.572 224 48.572S399.874 369.143 448 336z"/></g></svg><span style="margin-left:29px;position:relative;top:1px;">Monitored</span></div><div class="cell" style="left:160px"><svg width="20" height="20" viewBox="-239.500 -239.500 479 479" style="left:0;top:7.900px"><path fill="#5b95d3" d="M-214 -150L-192 -163H-110V167H-192L-214 154z"/><path fill="#3868ad" d="M-214 -150L-192 -163V167L-214 154z"/><path fill="#2c5a9c" d="M110 -163H183L213 -150V154L183 167H110z"/><path fill="#3d72b9" d="M181 -163H183L213 -150V154L183 167H181z"/><path fill="#3d72b9" d="M-117 -205L-80 -238H80L118 -205V205L80 238H-80L-117 205z"/><path fill="#2c5a9c" d="M-117 -205L-80 -238H-57V238H-80L-117 205z"/><path fill="#5b95d3" d="M48 -238H80L118 -205V205L80 238H48z"/></svg><span class="lnk" style="margin-left:30px;letter-spacing:0.144px">evg-rs-dev</span></div><div class="dot" style="left:505px;background:#49b1f5"></div><div class="dot" style="left:529px;background:#80eacb"></div><div class="dot" style="left:553px;background:#e6e6e6"></div><div class="dot" style="left:577px;background:#e6e6e6"></div><div class="dot" style="left:601px;background:#3dd584"></div><div class="dot" style="left:625px;background:#3da4f4"></div><div class="cell" style="left:736px"><svg width="18" height="18" viewBox="-9 -9 18 18" style="left:.130px;top:7.920px"><rect x="-6.080" y="-6.080" width="12.160" height="12.160" rx="1.200" transform="rotate(45)" fill="#bd0000"/><rect x="-1" y="-3.900" width="2" height="5" fill="#fff"/><rect x="-1" y="2.100" width="2" height="1.100" fill="#fff"/></svg><span style="margin-left:29px;position:relative;top:-1px">72</span></div></div><div class="row" style="top:291px"><div class="cell" style="left:10px"><svg width="24" height="24" viewBox="0 0 24 24" fill="none" style="left:0;top:6px"><path d="M1.720 8.270A10.950 10.950 0 1 1 15.750 22.290" fill="none" stroke="#ec8b00" stroke-width="1.500"/><g transform="translate(5.400 6) scale(.02946 .02578)"><path fill="#3a3a3a" d="M448 73.143v45.714C448 159.143 347.667 192 224 192S0 159.143 0 118.857V73.143C0 32.857 100.333 0 224 0s224 32.857 224 73.143zM448 176v102.857C448 319.143 347.667 352 224 352S0 319.143 0 278.857V176c48.125 33.143 136.208 48.572 224 48.572S399.874 209.143 448 176zm0 160v102.857C448 479.143 347.667 512 224 512S0 479.143 0 438.857V336c48.125 33.143 136.208 48.572 224 48.572S399.874 369.143 448 336z"/></g></svg><span style="margin-left:29px;position:relative;top:1px;">Monitored</span></div><div class="cell" style="left:160px"><svg width="20" height="20" viewBox="-239.500 -239.500 479 479" style="left:0;top:7.900px"><path fill="#5b95d3" d="M-214 -150L-192 -163H-110V167H-192L-214 154z"/><path fill="#3868ad" d="M-214 -150L-192 -163V167L-214 154z"/><path fill="#2c5a9c" d="M110 -163H183L213 -150V154L183 167H110z"/><path fill="#3d72b9" d="M181 -163H183L213 -150V154L183 167H181z"/><path fill="#3d72b9" d="M-117 -205L-80 -238H80L118 -205V205L80 238H-80L-117 205z"/><path fill="#2c5a9c" d="M-117 -205L-80 -238H-57V238H-80L-117 205z"/><path fill="#5b95d3" d="M48 -238H80L118 -205V205L80 238H48z"/></svg><span class="lnk" style="margin-left:30px;letter-spacing:0.215px">rs-custom-port</span></div><div class="dot" style="left:505px;background:#49b1f5"></div><div class="dot" style="left:529px;background:#80eacb"></div><div class="dot" style="left:553px;background:#e6e6e6"></div><div class="dot" style="left:577px;background:#f24dbd"></div><div class="dot" style="left:601px;background:#3dd584"></div><div class="dot" style="left:625px;background:#3da4f4"></div><div class="cell" style="left:736px"><svg width="18" height="18" viewBox="-9 -9 18 18" style="left:.130px;top:7.920px"><rect x="-6.080" y="-6.080" width="12.160" height="12.160" rx="1.200" transform="rotate(45)" fill="#bd0000"/><rect x="-1" y="-3.900" width="2" height="5" fill="#fff"/><rect x="-1" y="2.100" width="2" height="1.100" fill="#fff"/></svg><span style="margin-left:29px;position:relative;top:-1px">65</span></div></div><div class="row" style="top:327px"><div class="cell" style="left:10px"><svg width="24" height="24" viewBox="0 0 24 24" fill="none" style="left:0;top:6px"><circle cx="12" cy="12" r="11.300" fill="none" stroke="#2a9d5f" stroke-width="1.400"/><g transform="translate(5.400 6) scale(.02946 .02578)"><path fill="#3a3a3a" d="M448 73.143v45.714C448 159.143 347.667 192 224 192S0 159.143 0 118.857V73.143C0 32.857 100.333 0 224 0s224 32.857 224 73.143zM448 176v102.857C448 319.143 347.667 352 224 352S0 319.143 0 278.857V176c48.125 33.143 136.208 48.572 224 48.572S399.874 209.143 448 176zm0 160v102.857C448 479.143 347.667 512 224 512S0 479.143 0 438.857V336c48.125 33.143 136.208 48.572 224 48.572S399.874 369.143 448 336z"/></g></svg><span style="margin-left:29px;position:relative;top:1px;">Secured</span></div><div class="cell" style="left:160px"><svg width="20" height="20" viewBox="-239.500 -239.500 479 479" style="left:0;top:7.900px"><g fill="none" stroke="#33b3ea" stroke-width="50" stroke-linecap="round" stroke-linejoin="round"><path transform="rotate(0)" d="M219 -64L103 0L219 64"/><path transform="rotate(60)" d="M219 -64L103 0L219 64"/><path transform="rotate(120)" d="M219 -64L103 0L219 64"/><path transform="rotate(180)" d="M219 -64L103 0L219 64"/><path transform="rotate(240)" d="M219 -64L103 0L219 64"/><path transform="rotate(300)" d="M219 -64L103 0L219 64"/></g><rect x="-37" y="-37" width="74" height="74" rx="12" transform="rotate(45)" fill="#33b3ea"/></svg><span class="lnk" style="margin-left:30px;letter-spacing:0.129px">Ben Test</span></div><div class="dot" style="left:505px;background:#49b1f5"></div><div class="dot" style="left:529px;background:#80eacb"></div><div class="dot" style="left:553px;background:#e6e6e6"></div><div class="dot" style="left:577px;background:#e6e6e6"></div><div class="dot" style="left:601px;background:#3dd584"></div><div class="dot" style="left:625px;background:#3da4f4"></div><div class="cell" style="left:736px"><svg width="18" height="18" viewBox="-9 -1.500 18 18" style="left:.300px;top:8.200px"><path d="M0 .700L8 14H-8z" fill="#e88700" stroke="#e88700" stroke-width=".700" stroke-linejoin="round"/><rect x="-.950" y="5.600" width="1.900" height="4.400" fill="#fdf1dd"/><rect x="-.950" y="11.100" width="1.900" height="1.300" fill="#fdf1dd"/></svg><span style="margin-left:29px;position:relative;top:-1px">57</span></div></div><div class="row" style="top:363px"><div class="cell" style="left:10px"><svg width="24" height="24" viewBox="0 0 24 24" fill="none" style="left:0;top:6px"><circle cx="12" cy="12" r="11.300" fill="none" stroke="#2a9d5f" stroke-width="1.400"/><g transform="translate(5.400 6) scale(.02946 .02578)"><path fill="#3a3a3a" d="M448 73.143v45.714C448 159.143 347.667 192 224 192S0 159.143 0 118.857V73.143C0 32.857 100.333 0 224 0s224 32.857 224 73.143zM448 176v102.857C448 319.143 347.667 352 224 352S0 319.143 0 278.857V176c48.125 33.143 136.208 48.572 224 48.572S399.874 209.143 448 176zm0 160v102.857C448 479.143 347.667 512 224 512S0 479.143 0 438.857V336c48.125 33.143 136.208 48.572 224 48.572S399.874 369.143 448 336z"/></g></svg><span style="margin-left:29px;position:relative;top:1px;">Secured</span></div><div class="cell" style="left:160px"><svg width="20" height="20" viewBox="-239.500 -239.500 479 479" style="left:0;top:7.900px"><g fill="none" stroke="#33b3ea" stroke-width="50" stroke-linecap="round" stroke-linejoin="round"><path transform="rotate(0)" d="M219 -64L103 0L219 64"/><path transform="rotate(60)" d="M219 -64L103 0L219 64"/><path transform="rotate(120)" d="M219 -64L103 0L219 64"/><path transform="rotate(180)" d="M219 -64L103 0L219 64"/><path transform="rotate(240)" d="M219 -64L103 0L219 64"/><path transform="rotate(300)" d="M219 -64L103 0L219 64"/></g><rect x="-37" y="-37" width="74" height="74" rx="12" transform="rotate(45)" fill="#33b3ea"/></svg><span class="lnk" style="margin-left:30px;letter-spacing:0.082px">Loren test11</span></div><div class="dot" style="left:505px;background:#49b1f5"></div><div class="dot" style="left:529px;background:#80eacb"></div><div class="dot" style="left:553px;background:#e6e6e6"></div><div class="dot" style="left:577px;background:#f24dbd"></div><div class="dot" style="left:601px;background:#3dd584"></div><div class="dot" style="left:625px;background:#3da4f4"></div><div class="cell" style="left:736px"><svg width="18" height="18" viewBox="-9 -1.500 18 18" style="left:.300px;top:8.200px"><path d="M0 .700L8 14H-8z" fill="#e88700" stroke="#e88700" stroke-width=".700" stroke-linejoin="round"/><rect x="-.950" y="5.600" width="1.900" height="4.400" fill="#fdf1dd"/><rect x="-.950" y="11.100" width="1.900" height="1.300" fill="#fdf1dd"/></svg><span style="margin-left:29px;position:relative;top:-1px">55</span></div></div><div class="row" style="top:399px"><div class="cell" style="left:10px"><svg width="24" height="24" viewBox="0 0 24 24" fill="none" style="left:0;top:6px"><path d="M1.420 9.170A10.950 10.950 0 0 1 22.580 9.170" fill="none" stroke="#c8000a" stroke-width="1.500"/><g transform="translate(5.400 6) scale(.02946 .02578)"><path fill="#3a3a3a" d="M448 73.143v45.714C448 159.143 347.667 192 224 192S0 159.143 0 118.857V73.143C0 32.857 100.333 0 224 0s224 32.857 224 73.143zM448 176v102.857C448 319.143 347.667 352 224 352S0 319.143 0 278.857V176c48.125 33.143 136.208 48.572 224 48.572S399.874 209.143 448 176zm0 160v102.857C448 479.143 347.667 512 224 512S0 479.143 0 438.857V336c48.125 33.143 136.208 48.572 224 48.572S399.874 369.143 448 336z"/></g></svg><span style="margin-left:29px;position:relative;top:1px;">Discovered</span></div><div class="cell" style="left:160px"><svg width="20" height="20" viewBox="-239.500 -239.500 479 479" style="left:0;top:7.900px"><g fill="none" stroke="#33b3ea" stroke-width="50" stroke-linecap="round" stroke-linejoin="round"><path transform="rotate(0)" d="M219 -64L103 0L219 64"/><path transform="rotate(60)" d="M219 -64L103 0L219 64"/><path transform="rotate(120)" d="M219 -64L103 0L219 64"/><path transform="rotate(180)" d="M219 -64L103 0L219 64"/><path transform="rotate(240)" d="M219 -64L103 0L219 64"/><path transform="rotate(300)" d="M219 -64L103 0L219 64"/></g><rect x="-37" y="-37" width="74" height="74" rx="12" transform="rotate(45)" fill="#33b3ea"/></svg><span class="lnk" style="margin-left:30px;letter-spacing:0.000px">alex security policy test</span></div><div class="dot" style="left:505px;background:#49b1f5"></div><div class="dot" style="left:529px;background:#80eacb"></div><div class="dot" style="left:553px;background:#e6e6e6"></div><div class="dot" style="left:577px;background:#e6e6e6"></div><div class="dot" style="left:601px;background:#3dd584"></div><div class="dot" style="left:625px;background:#e6e6e6"></div><div class="cell" style="left:736px"><svg width="18" height="18" viewBox="-9 -1.500 18 18" style="left:.300px;top:8.200px"><path d="M0 .700L8 14H-8z" fill="#e88700" stroke="#e88700" stroke-width=".700" stroke-linejoin="round"/><rect x="-.950" y="5.600" width="1.900" height="4.400" fill="#fdf1dd"/><rect x="-.950" y="11.100" width="1.900" height="1.300" fill="#fdf1dd"/></svg><span style="margin-left:29px;position:relative;top:-1px">52</span></div></div><div class="row" style="top:435px"><div class="cell" style="left:10px"><svg width="24" height="24" viewBox="0 0 24 24" fill="none" style="left:0;top:6px"><circle cx="12" cy="12" r="11.300" fill="none" stroke="#2a9d5f" stroke-width="1.400"/><g transform="translate(5.400 6) scale(.02946 .02578)"><path fill="#3a3a3a" d="M448 73.143v45.714C448 159.143 347.667 192 224 192S0 159.143 0 118.857V73.143C0 32.857 100.333 0 224 0s224 32.857 224 73.143zM448 176v102.857C448 319.143 347.667 352 224 352S0 319.143 0 278.857V176c48.125 33.143 136.208 48.572 224 48.572S399.874 209.143 448 176zm0 160v102.857C448 479.143 347.667 512 224 512S0 479.143 0 438.857V336c48.125 33.143 136.208 48.572 224 48.572S399.874 369.143 448 336z"/></g></svg><span style="margin-left:29px;position:relative;top:1px;">Secured</span></div><div class="cell" style="left:160px"><svg width="20" height="20" viewBox="-239.500 -239.500 479 479" style="left:0;top:7.900px"><g fill="none" stroke="#33b3ea" stroke-width="50" stroke-linecap="round" stroke-linejoin="round"><path transform="rotate(0)" d="M219 -64L103 0L219 64"/><path transform="rotate(60)" d="M219 -64L103 0L219 64"/><path transform="rotate(120)" d="M219 -64L103 0L219 64"/><path transform="rotate(180)" d="M219 -64L103 0L219 64"/><path transform="rotate(240)" d="M219 -64L103 0L219 64"/><path transform="rotate(300)" d="M219 -64L103 0L219 64"/></g><rect x="-37" y="-37" width="74" height="74" rx="12" transform="rotate(45)" fill="#33b3ea"/></svg><span class="lnk" style="margin-left:30px;letter-spacing:0.012px">Ben Lineage Tests</span></div><div class="dot" style="left:505px;background:#49b1f5"></div><div class="dot" style="left:529px;background:#80eacb"></div><div class="dot" style="left:553px;background:#e6e6e6"></div><div class="dot" style="left:577px;background:#e6e6e6"></div><div class="dot" style="left:601px;background:#3dd584"></div><div class="dot" style="left:625px;background:#3da4f4"></div><div class="cell" style="left:736px"><svg width="18" height="18" viewBox="-9 -1.500 18 18" style="left:.300px;top:8.200px"><path d="M0 .700L8 14H-8z" fill="#e88700" stroke="#e88700" stroke-width=".700" stroke-linejoin="round"/><rect x="-.950" y="5.600" width="1.900" height="4.400" fill="#fdf1dd"/><rect x="-.950" y="11.100" width="1.900" height="1.300" fill="#fdf1dd"/></svg><span style="margin-left:29px;position:relative;top:-1px">52</span></div></div><div class="row" style="top:471px"><div class="cell" style="left:10px"><svg width="24" height="24" viewBox="0 0 24 24" fill="none" style="left:0;top:6px"><path d="M1.720 8.270A10.950 10.950 0 1 1 15.750 22.290" fill="none" stroke="#ec8b00" stroke-width="1.500"/><g transform="translate(5.400 6) scale(.02946 .02578)"><path fill="#3a3a3a" d="M448 73.143v45.714C448 159.143 347.667 192 224 192S0 159.143 0 118.857V73.143C0 32.857 100.333 0 224 0s224 32.857 224 73.143zM448 176v102.857C448 319.143 347.667 352 224 352S0 319.143 0 278.857V176c48.125 33.143 136.208 48.572 224 48.572S399.874 209.143 448 176zm0 160v102.857C448 479.143 347.667 512 224 512S0 479.143 0 438.857V336c48.125 33.143 136.208 48.572 224 48.572S399.874 369.143 448 336z"/></g></svg><span style="margin-left:29px;position:relative;top:1px;">Monitored</span></div><div class="cell" style="left:160px"><svg width="20" height="20" viewBox="-239.500 -239.500 479 479" style="left:0;top:7.900px"><path fill="#ee8430" d="M-240 -51Q-240 -63 -219 -63Q-190 -63 -190 -51V-3H-240z"/><path fill="#ad531f" d="M-240 -51Q-240 -63 -219 -63V-3H-240z"/><path fill="#ee8430" d="M-190 -126Q-190 -138 -158 -138Q-115 -138 -115 -126V22H-190z"/><path fill="#ad531f" d="M-190 -126Q-190 -138 -158 -138V22H-190z"/><path fill="#ee8430" d="M-115 -96Q-115 -108 -86 -108Q-45 -108 -45 -96V40H-115z"/><path fill="#ad531f" d="M-115 -96Q-115 -108 -86 -108V40H-115z"/><path fill="#ee8430" d="M-45 -216Q-45 -228 -14 -228Q30 -228 30 -216V52H-45z"/><path fill="#ad531f" d="M-45 -216Q-45 -228 -14 -228V52H-45z"/><path fill="#ee8430" d="M30 -146Q30 -158 59 -158Q100 -158 100 -146V40H30z"/><path fill="#ad531f" d="M30 -146Q30 -158 59 -158V40H30z"/><path fill="#ee8430" d="M100 -211Q100 -223 129 -223Q170 -223 170 -211V22H100z"/><path fill="#ad531f" d="M100 -211Q100 -223 129 -223V22H100z"/><path fill="#ee8430" d="M170 -226Q170 -238 189 -238Q215 -238 215 -226V-8H170z"/><path fill="#ad531f" d="M170 -226Q170 -238 189 -238V-8H170z"/><path fill="#f9bb82" d="M-240 30L-15 100L215 30V52L-15 122L-240 52z"/><path fill="#ee8430" d="M-240 46L-15 116L215 46V97L-15 217L-240 102z"/><path fill="#ad531f" d="M-240 46L-15 116V217L-240 102z"/></svg><span class="lnk" style="margin-left:30px;letter-spacing:0.007px">test new athena</span></div><div class="dot" style="left:505px;background:#49b1f5"></div><div class="dot" style="left:529px;background:#80eacb"></div><div class="dot" style="left:553px;background:#e6e6e6"></div><div class="dot" style="left:577px;background:#e6e6e6"></div><div class="dot" style="left:601px;background:#3dd584"></div><div class="dot" style="left:625px;background:#38b8cf"></div><div class="cell" style="left:736px"><svg width="18" height="18" viewBox="-9 -1.500 18 18" style="left:.300px;top:8.200px"><path d="M0 .700L8 14H-8z" fill="#e88700" stroke="#e88700" stroke-width=".700" stroke-linejoin="round"/><rect x="-.950" y="5.600" width="1.900" height="4.400" fill="#fdf1dd"/><rect x="-.950" y="11.100" width="1.900" height="1.300" fill="#fdf1dd"/></svg><span style="margin-left:29px;position:relative;top:-1px">52</span></div></div><div class="row" style="top:507px"><div class="cell" style="left:10px"><svg width="24" height="24" viewBox="0 0 24 24" fill="none" style="left:0;top:6px"><path d="M1.420 9.170A10.950 10.950 0 0 1 22.580 9.170" fill="none" stroke="#c8000a" stroke-width="1.500"/><g transform="translate(5.400 6) scale(.02946 .02578)"><path fill="#3a3a3a" d="M448 73.143v45.714C448 159.143 347.667 192 224 192S0 159.143 0 118.857V73.143C0 32.857 100.333 0 224 0s224 32.857 224 73.143zM448 176v102.857C448 319.143 347.667 352 224 352S0 319.143 0 278.857V176c48.125 33.143 136.208 48.572 224 48.572S399.874 209.143 448 176zm0 160v102.857C448 479.143 347.667 512 224 512S0 479.143 0 438.857V336c48.125 33.143 136.208 48.572 224 48.572S399.874 369.143 448 336z"/></g></svg><span style="margin-left:29px;position:relative;top:1px;">Discovered</span></div><div class="cell" style="left:160px"><svg width="20" height="20" viewBox="-239.500 -239.500 479 479" style="left:0;top:7.900px"><g fill="none" stroke="#33b3ea" stroke-width="50" stroke-linecap="round" stroke-linejoin="round"><path transform="rotate(0)" d="M219 -64L103 0L219 64"/><path transform="rotate(60)" d="M219 -64L103 0L219 64"/><path transform="rotate(120)" d="M219 -64L103 0L219 64"/><path transform="rotate(180)" d="M219 -64L103 0L219 64"/><path transform="rotate(240)" d="M219 -64L103 0L219 64"/><path transform="rotate(300)" d="M219 -64L103 0L219 64"/></g><rect x="-37" y="-37" width="74" height="74" rx="12" transform="rotate(45)" fill="#33b3ea"/></svg><span class="lnk" style="margin-left:30px;letter-spacing:0.025px">alexk</span></div><div class="dot" style="left:505px;background:#49b1f5"></div><div class="dot" style="left:529px;background:#80eacb"></div><div class="dot" style="left:553px;background:#e6e6e6"></div><div class="dot" style="left:577px;background:#e6e6e6"></div><div class="dot" style="left:601px;background:#3dd584"></div><div class="dot" style="left:625px;background:#e6e6e6"></div><div class="cell" style="left:736px"><svg width="18" height="18" viewBox="-9 -1.500 18 18" style="left:.300px;top:8.200px"><path d="M0 .700L8 14H-8z" fill="#e88700" stroke="#e88700" stroke-width=".700" stroke-linejoin="round"/><rect x="-.950" y="5.600" width="1.900" height="4.400" fill="#fdf1dd"/><rect x="-.950" y="11.100" width="1.900" height="1.300" fill="#fdf1dd"/></svg><span style="margin-left:29px;position:relative;top:-1px">52</span></div></div><div class="row" style="top:543px"><div class="cell" style="left:10px"><svg width="24" height="24" viewBox="0 0 24 24" fill="none" style="left:0;top:6px"><circle cx="12" cy="12" r="11.300" fill="none" stroke="#2a9d5f" stroke-width="1.400"/><g transform="translate(5.400 6) scale(.02946 .02578)"><path fill="#3a3a3a" d="M448 73.143v45.714C448 159.143 347.667 192 224 192S0 159.143 0 118.857V73.143C0 32.857 100.333 0 224 0s224 32.857 224 73.143zM448 176v102.857C448 319.143 347.667 352 224 352S0 319.143 0 278.857V176c48.125 33.143 136.208 48.572 224 48.572S399.874 209.143 448 176zm0 160v102.857C448 479.143 347.667 512 224 512S0 479.143 0 438.857V336c48.125 33.143 136.208 48.572 224 48.572S399.874 369.143 448 336z"/></g></svg><span style="margin-left:29px;position:relative;top:1px;">Secured</span></div><div class="cell" style="left:160px"><svg width="20" height="20" viewBox="-239.500 -239.500 479 479" style="left:0;top:7.900px"><path fill="#5b95d3" d="M-214 -150L-192 -163H-110V167H-192L-214 154z"/><path fill="#3868ad" d="M-214 -150L-192 -163V167L-214 154z"/><path fill="#2c5a9c" d="M110 -163H183L213 -150V154L183 167H110z"/><path fill="#3d72b9" d="M181 -163H183L213 -150V154L183 167H181z"/><path fill="#3d72b9" d="M-117 -205L-80 -238H80L118 -205V205L80 238H-80L-117 205z"/><path fill="#2c5a9c" d="M-117 -205L-80 -238H-57V238H-80L-117 205z"/><path fill="#5b95d3" d="M48 -238H80L118 -205V205L80 238H48z"/></svg><span class="lnk" style="margin-left:30px;letter-spacing:0.000px">rs store</span></div><div class="dot" style="left:505px;background:#49b1f5"></div><div class="dot" style="left:529px;background:#80eacb"></div><div class="dot" style="left:553px;background:#e6e6e6"></div><div class="dot" style="left:577px;background:#e6e6e6"></div><div class="dot" style="left:601px;background:#3dd584"></div><div class="dot" style="left:625px;background:#3da4f4"></div><div class="cell" style="left:736px"><svg width="18" height="18" viewBox="-9 -1.500 18 18" style="left:.300px;top:8.200px"><path d="M0 .700L8 14H-8z" fill="#e88700" stroke="#e88700" stroke-width=".700" stroke-linejoin="round"/><rect x="-.950" y="5.600" width="1.900" height="4.400" fill="#fdf1dd"/><rect x="-.950" y="11.100" width="1.900" height="1.300" fill="#fdf1dd"/></svg><span style="margin-left:29px;position:relative;top:-1px">50</span></div></div></div>
<div class="panel" style="left:999px;width:900px"><div class="thead"><div class="th" style="left:50px;">Object</div><div class="th" style="left:300px;">Alert</div><div class="th" style="left:758px;">Timestamp</div><div class="sep" style="left:39px"></div><div class="sep" style="left:289px"></div><div class="sep" style="left:747px"></div><div class="abs" style="left:843px;top:10px"><svg width="18" height="18" viewBox="0 0 24 24" fill="#444" style=""><path d="M20 12l-1.41-1.41L13 16.17V4h-2v12.17l-5.58-5.59L4 12l8 8 8-8z"/></svg></div></div><div class="row" style="top:39px"><div class="cell" style="left:9.500px"><svg width="20" height="20" viewBox="0 0 24 24" fill="#e88700" style="left:0;top:8px"><path d="M12 2L4 5v6.09c0 5.05 3.41 9.76 8 10.91 4.59-1.15 8-5.86 8-10.91V5l-8-3zm1 14h-2v-2h2v2zm0-4h-2V7h2v5z"/></svg></div><div class="cell" style="left:50px"><svg width="20" height="20" viewBox="-239.500 -239.500 479 479" style="left:0;top:6.830px"><path fill="#5b95d3" d="M-214 -150L-192 -163H-110V167H-192L-214 154z"/><path fill="#3868ad" d="M-214 -150L-192 -163V167L-214 154z"/><path fill="#2c5a9c" d="M110 -163H183L213 -150V154L183 167H110z"/><path fill="#3d72b9" d="M181 -163H183L213 -150V154L183 167H181z"/><path fill="#3d72b9" d="M-117 -205L-80 -238H80L118 -205V205L80 238H-80L-117 205z"/><path fill="#2c5a9c" d="M-117 -205L-80 -238H-57V238H-80L-117 205z"/><path fill="#5b95d3" d="M48 -238H80L118 -205V205L80 238H48z"/></svg><span style="margin-left:30px;position:relative;top:-1px;letter-spacing:.060px">Redshift Data Store 269</span></div><div class="cell" style="left:300px"><span style="">Redshift user avihai<span style="display:inline-block;transform:scaleX(1.250);margin:0 .900px">_</span>direct<span style="display:inline-block;transform:scaleX(1.250);margin:0 .900px">_</span>1 is stale</span></div><div class="cell" style="left:758px"><span style="letter-spacing:.190px">Sep 03, 2025</span></div></div><div class="row" style="top:75px"><div class="cell" style="left:9.500px"><svg width="20" height="20" viewBox="0 0 24 24" fill="#e88700" style="left:0;top:8px"><path d="M12 2L4 5v6.09c0 5.05 3.41 9.76 8 10.91 4.59-1.15 8-5.86 8-10.91V5l-8-3zm1 14h-2v-2h2v2zm0-4h-2V7h2v5z"/></svg></div><div class="cell" style="left:50px"><svg width="20" height="20" viewBox="-239.500 -239.500 479 479" style="left:0;top:6.830px"><path fill="#5b95d3" d="M-214 -150L-192 -163H-110V167H-192L-214 154z"/><path fill="#3868ad" d="M-214 -150L-192 -163V167L-214 154z"/><path fill="#2c5a9c" d="M110 -163H183L213 -150V154L183 167H110z"/><path fill="#3d72b9" d="M181 -163H183L213 -150V154L183 167H181z"/><path fill="#3d72b9" d="M-117 -205L-80 -238H80L118 -205V205L80 238H-80L-117 205z"/><path fill="#2c5a9c" d="M-117 -205L-80 -238H-57V238H-80L-117 205z"/><path fill="#5b95d3" d="M48 -238H80L118 -205V205L80 238H48z"/></svg><span style="margin-left:30px;position:relative;top:-1px;letter-spacing:.060px">Redshift Data Store 269</span></div><div class="cell" style="left:300px"><span style="">Redshift user avihai<span style="display:inline-block;transform:scaleX(1.250);margin:0 .900px">_</span>role<span style="display:inline-block;transform:scaleX(1.250);margin:0 .900px">_</span>3 is stale</span></div><div class="cell" style="left:758px"><span style="letter-spacing:.190px">Sep 03, 2025</span></div></div><div class="row" style="top:111px"><div class="cell" style="left:9.500px"><svg width="20" height="20" viewBox="0 0 24 24" fill="#e88700" style="left:0;top:8px"><path d="M12 2L4 5v6.09c0 5.05 3.41 9.76 8 10.91 4.59-1.15 8-5.86 8-10.91V5l-8-3zm1 14h-2v-2h2v2zm0-4h-2V7h2v5z"/></svg></div><div class="cell b" style="left:50px"><svg width="20" height="20" viewBox="-239.500 -239.500 479 479" style="left:0;top:6.830px"><path fill="#5b95d3" d="M-214 -150L-192 -163H-110V167H-192L-214 154z"/><path fill="#3868ad" d="M-214 -150L-192 -163V167L-214 154z"/><path fill="#2c5a9c" d="M110 -163H183L213 -150V154L183 167H110z"/><path fill="#3d72b9" d="M181 -163H183L213 -150V154L183 167H181z"/><path fill="#3d72b9" d="M-117 -205L-80 -238H80L118 -205V205L80 238H-80L-117 205z"/><path fill="#2c5a9c" d="M-117 -205L-80 -238H-57V238H-80L-117 205z"/><path fill="#5b95d3" d="M48 -238H80L118 -205V205L80 238H48z"/></svg><span style="margin-left:30px;position:relative;top:-1px;letter-spacing:-.125px">Redshift Data Store 269</span></div><div class="cell b" style="left:300px"><span style="letter-spacing:-.025px">Redshift user avihai<span style="display:inline-block;transform:scaleX(1.250);margin:0 .900px">_</span>1 is stale</span></div><div class="cell b" style="left:758px"><span style="letter-spacing:.030px">Sep 03, 2025</span></div></div><div class="row" style="top:147px"><div class="cell" style="left:9.500px"><svg width="20" height="20" viewBox="0 0 24 24" fill="#e88700" style="left:0;top:8px"><path d="M12 2L4 5v6.09c0 5.05 3.41 9.76 8 10.91 4.59-1.15 8-5.86 8-10.91V5l-8-3zm1 14h-2v-2h2v2zm0-4h-2V7h2v5z"/></svg></div><div class="cell b" style="left:50px"><svg width="20" height="20" viewBox="-239.500 -239.500 479 479" style="left:0;top:6.830px"><path fill="#5b95d3" d="M-214 -150L-192 -163H-110V167H-192L-214 154z"/><path fill="#3868ad" d="M-214 -150L-192 -163V167L-214 154z"/><path fill="#2c5a9c" d="M110 -163H183L213 -150V154L183 167H110z"/><path fill="#3d72b9" d="M181 -163H183L213 -150V154L183 167H181z"/><path fill="#3d72b9" d="M-117 -205L-80 -238H80L118 -205V205L80 238H-80L-117 205z"/><path fill="#2c5a9c" d="M-117 -205L-80 -238H-57V238H-80L-117 205z"/><path fill="#5b95d3" d="M48 -238H80L118 -205V205L80 238H48z"/></svg><span style="margin-left:30px;position:relative;top:-1px;letter-spacing:-.125px">Redshift Data Store 269</span></div><div class="cell b" style="left:300px"><span style="letter-spacing:-.025px">Redshift user dev-redshift-user@satoricyber.com is stale</span></div><div class="cell b" style="left:758px"><span style="letter-spacing:.030px">Sep 03, 2025</span></div></div><div class="row" style="top:183px"><div class="cell" style="left:9.500px"><svg width="20" height="20" viewBox="0 0 24 24" fill="#e88700" style="left:0;top:8px"><path d="M12 2L4 5v6.09c0 5.05 3.41 9.76 8 10.91 4.59-1.15 8-5.86 8-10.91V5l-8-3zm1 14h-2v-2h2v2zm0-4h-2V7h2v5z"/></svg></div><div class="cell b" style="left:50px"><svg width="20" height="20" viewBox="-239.500 -239.500 479 479" style="left:0;top:6.830px"><path fill="#5b95d3" d="M-214 -150L-192 -163H-110V167H-192L-214 154z"/><path fill="#3868ad" d="M-214 -150L-192 -163V167L-214 154z"/><path fill="#2c5a9c" d="M110 -163H183L213 -150V154L183 167H110z"/><path fill="#3d72b9" d="M181 -163H183L213 -150V154L183 167H181z"/><path fill="#3d72b9" d="M-117 -205L-80 -238H80L118 -205V205L80 238H-80L-117 205z"/><path fill="#2c5a9c" d="M-117 -205L-80 -238H-57V238H-80L-117 205z"/><path fill="#5b95d3" d="M48 -238H80L118 -205V205L80 238H48z"/></svg><span style="margin-left:30px;position:relative;top:-1px;letter-spacing:-.125px">Redshift Data Store 269</span></div><div class="cell b" style="left:300px"><span style="letter-spacing:-.025px">Redshift user evgeny+okta1@satoricyber.com is stale</span></div><div class="cell b" style="left:758px"><span style="letter-spacing:.030px">Sep 03, 2025</span></div></div><div class="row" style="top:219px"><div class="cell" style="left:9.500px"><svg width="20" height="20" viewBox="0 0 24 24" fill="#e88700" style="left:0;top:8px"><path d="M12 2L4 5v6.09c0 5.05 3.41 9.76 8 10.91 4.59-1.15 8-5.86 8-10.91V5l-8-3zm1 14h-2v-2h2v2zm0-4h-2V7h2v5z"/></svg></div><div class="cell b" style="left:50px"><svg width="20" height="20" viewBox="-239.500 -239.500 479 479" style="left:0;top:6.830px"><path fill="#5b95d3" d="M-214 -150L-192 -163H-110V167H-192L-214 154z"/><path fill="#3868ad" d="M-214 -150L-192 -163V167L-214 154z"/><path fill="#2c5a9c" d="M110 -163H183L213 -150V154L183 167H110z"/><path fill="#3d72b9" d="M181 -163H183L213 -150V154L183 167H181z"/><path fill="#3d72b9" d="M-117 -205L-80 -238H80L118 -205V205L80 238H-80L-117 205z"/><path fill="#2c5a9c" d="M-117 -205L-80 -238H-57V238H-80L-117 205z"/><path fill="#5b95d3" d="M48 -238H80L118 -205V205L80 238H48z"/></svg><span style="margin-left:30px;position:relative;top:-1px;letter-spacing:-.125px">Redshift Data Store 269</span></div><div class="cell b" style="left:300px"><span style="letter-spacing:-.025px">Redshift user satori<span style="display:inline-block;transform:scaleX(1.250);margin:0 .900px">_</span>scanner is stale</span></div><div class="cell b" style="left:758px"><span style="letter-spacing:.030px">Sep 03, 2025</span></div></div><div class="row" style="top:255px"><div class="cell" style="left:9.500px"><svg width="20" height="20" viewBox="0 0 24 24" fill="#e88700" style="left:0;top:8px"><path d="M12 2L4 5v6.09c0 5.05 3.41 9.76 8 10.91 4.59-1.15 8-5.86 8-10.91V5l-8-3zm1 14h-2v-2h2v2zm0-4h-2V7h2v5z"/></svg></div><div class="cell b" style="left:50px"><svg width="20" height="20" viewBox="-239.500 -239.500 479 479" style="left:0;top:6.830px"><path fill="#5b95d3" d="M-214 -150L-192 -163H-110V167H-192L-214 154z"/><path fill="#3868ad" d="M-214 -150L-192 -163V167L-214 154z"/><path fill="#2c5a9c" d="M110 -163H183L213 -150V154L183 167H110z"/><path fill="#3d72b9" d="M181 -163H183L213 -150V154L183 167H181z"/><path fill="#3d72b9" d="M-117 -205L-80 -238H80L118 -205V205L80 238H-80L-117 205z"/><path fill="#2c5a9c" d="M-117 -205L-80 -238H-57V238H-80L-117 205z"/><path fill="#5b95d3" d="M48 -238H80L118 -205V205L80 238H48z"/></svg><span style="margin-left:30px;position:relative;top:-1px;letter-spacing:-.125px">Redshift Data Store 269</span></div><div class="cell b" style="left:300px"><span style="letter-spacing:-.025px">Redshift user avihai<span style="display:inline-block;transform:scaleX(1.250);margin:0 .900px">_</span>role<span style="display:inline-block;transform:scaleX(1.250);margin:0 .900px">_</span>1 is stale</span></div><div class="cell b" style="left:758px"><span style="letter-spacing:.030px">Sep 03, 2025</span></div></div><div class="row" style="top:291px"><div class="cell" style="left:9.500px"><svg width="20" height="20" viewBox="0 0 24 24" fill="#e88700" style="left:0;top:8px"><path d="M12 2L4 5v6.09c0 5.05 3.41 9.76 8 10.91 4.59-1.15 8-5.86 8-10.91V5l-8-3zm1 14h-2v-2h2v2zm0-4h-2V7h2v5z"/></svg></div><div class="cell b" style="left:50px"><svg width="20" height="20" viewBox="-239.500 -239.500 479 479" style="left:0;top:6.830px"><path fill="#5b95d3" d="M-214 -150L-192 -163H-110V167H-192L-214 154z"/><path fill="#3868ad" d="M-214 -150L-192 -163V167L-214 154z"/><path fill="#2c5a9c" d="M110 -163H183L213 -150V154L183 167H110z"/><path fill="#3d72b9" d="M181 -163H183L213 -150V154L183 167H181z"/><path fill="#3d72b9" d="M-117 -205L-80 -238H80L118 -205V205L80 238H-80L-117 205z"/><path fill="#2c5a9c" d="M-117 -205L-80 -238H-57V238H-80L-117 205z"/><path fill="#5b95d3" d="M48 -238H80L118 -205V205L80 238H48z"/></svg><span style="margin-left:30px;position:relative;top:-1px;letter-spacing:-.125px">Redshift Data Store 269</span></div><div class="cell b" style="left:300px"><span style="letter-spacing:-.025px">Redshift user avihai<span style="display:inline-block;transform:scaleX(1.250);margin:0 .900px">_</span>2 is stale</span></div><div class="cell b" style="left:758px"><span style="letter-spacing:.030px">Sep 03, 2025</span></div></div><div class="row" style="top:327px"><div class="cell" style="left:9.500px"><svg width="20" height="20" viewBox="0 0 24 24" fill="#e88700" style="left:0;top:8px"><path d="M12 2L4 5v6.09c0 5.05 3.41 9.76 8 10.91 4.59-1.15 8-5.86 8-10.91V5l-8-3zm1 14h-2v-2h2v2zm0-4h-2V7h2v5z"/></svg></div><div class="cell b" style="left:50px"><svg width="20" height="20" viewBox="-239.500 -239.500 479 479" style="left:0;top:6.830px"><path fill="#5b95d3" d="M-214 -150L-192 -163H-110V167H-192L-214 154z"/><path fill="#3868ad" d="M-214 -150L-192 -163V167L-214 154z"/><path fill="#2c5a9c" d="M110 -163H183L213 -150V154L183 167H110z"/><path fill="#3d72b9" d="M181 -163H183L213 -150V154L183 167H181z"/><path fill="#3d72b9" d="M-117 -205L-80 -238H80L118 -205V205L80 238H-80L-117 205z"/><path fill="#2c5a9c" d="M-117 -205L-80 -238H-57V238H-80L-117 205z"/><path fill="#5b95d3" d="M48 -238H80L118 -205V205L80 238H48z"/></svg><span style="margin-left:30px;position:relative;top:-1px;letter-spacing:-.125px">Redshift Data Store 269</span></div><div class="cell b" style="left:300px"><span style="letter-spacing:-.025px">Redshift user tomer.shani@satoricyber.com is stale</span></div><div class="cell b" style="left:758px"><span style="letter-spacing:.030px">Sep 03, 2025</span></div></div><div class="row" style="top:363px"><div class="cell" style="left:9.500px"><svg width="20" height="20" viewBox="0 0 24 24" fill="#e88700" style="left:0;top:8px"><path d="M12 2L4 5v6.09c0 5.05 3.41 9.76 8 10.91 4.59-1.15 8-5.86 8-10.91V5l-8-3zm1 14h-2v-2h2v2zm0-4h-2V7h2v5z"/></svg></div><div class="cell b" style="left:50px"><svg width="20" height="20" viewBox="-239.500 -239.500 479 479" style="left:0;top:6.830px"><path fill="#5b95d3" d="M-214 -150L-192 -163H-110V167H-192L-214 154z"/><path fill="#3868ad" d="M-214 -150L-192 -163V167L-214 154z"/><path fill="#2c5a9c" d="M110 -163H183L213 -150V154L183 167H110z"/><path fill="#3d72b9" d="M181 -163H183L213 -150V154L183 167H181z"/><path fill="#3d72b9" d="M-117 -205L-80 -238H80L118 -205V205L80 238H-80L-117 205z"/><path fill="#2c5a9c" d="M-117 -205L-80 -238H-57V238H-80L-117 205z"/><path fill="#5b95d3" d="M48 -238H80L118 -205V205L80 238H48z"/></svg><span style="margin-left:30px;position:relative;top:-1px;letter-spacing:-.125px">Redshift Data Store 269</span></div><div class="cell b" style="left:300px"><span style="letter-spacing:-.025px">Redshift user alexk@satoricyber.com is stale</span></div><div class="cell b" style="left:758px"><span style="letter-spacing:.030px">Sep 03, 2025</span></div></div></div>
<div id="frame"></div></div></body></html>
